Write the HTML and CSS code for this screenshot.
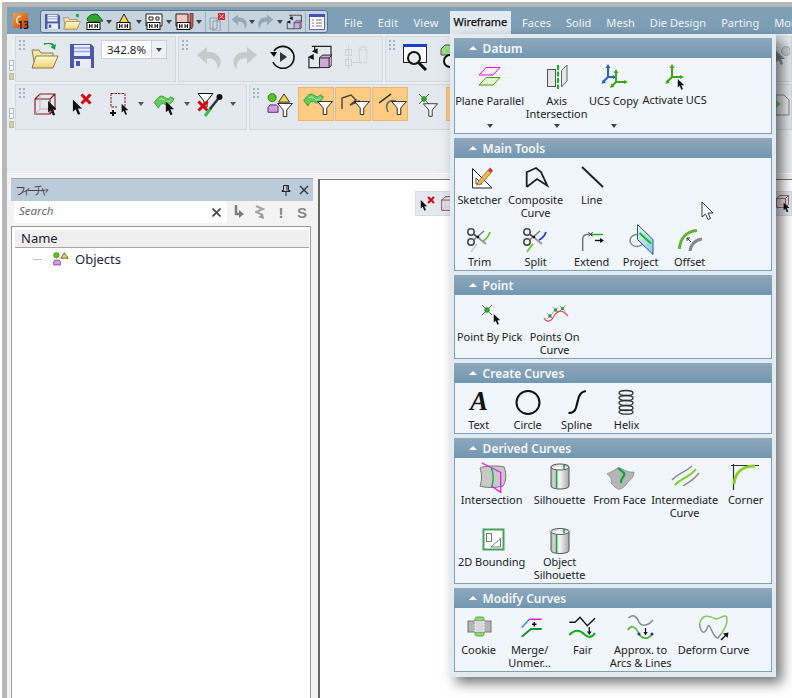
FILE: index.html
```html
<!DOCTYPE html>
<html lang="en">
<head>
<meta charset="utf-8">
<title>Wireframe</title>
<link rel="stylesheet" href="styles.css">
</head>
<body>
<svg class="defs" width="0" height="0">
  <defs>
    <linearGradient id="gFold" x1="0" y1="0" x2="0" y2="1"><stop offset="0" stop-color="#fffbd8"/><stop offset="1" stop-color="#f5cf70"/></linearGradient>
    <linearGradient id="gCyl" x1="0" y1="0" x2="1" y2="0"><stop offset="0" stop-color="#bdbdbd"/><stop offset=".5" stop-color="#f4f4f4"/><stop offset="1" stop-color="#a8a8a8"/></linearGradient>
    <linearGradient id="gPlane" x1="0" y1="0" x2="1" y2="1"><stop offset="0" stop-color="#e6f3fb"/><stop offset="1" stop-color="#8cc6e8"/></linearGradient>
    <symbol id="cur" viewBox="0 0 12 17"><path d="M1 0V13L4 10.5 6.5 16.5 9 15.5 6.500 9.500H11Z" fill="#111"/></symbol>
    <symbol id="fun" viewBox="0 0 18 16"><path d="M.5.500H17.500L11 8V15.500H7V8Z" fill="#fff" stroke="#111"/></symbol>
    <symbol id="xred" viewBox="0 0 12 12"><path d="M1.500 1.500 10.500 10.500M10.500 1.500 1.500 10.500" stroke="#d8000c" stroke-width="3" fill="none"/></symbol>
    <symbol id="ribbon" viewBox="0 0 22 16"><path d="M.5 9C4 5 6 1 10 2.500 14 4.500 15 7 18 3L21.500 5C19 11 15 13 12 11 8.500 9 7 11 5 15Z" fill="#63cb5e" stroke="#3d9c3d"/><path d="M6 6C8 5 10 5 12 7M13 8C15 9 17 8 19 6" fill="none" stroke="#b8efb0"/></symbol>
    <symbol id="flop" viewBox="0 0 24 24"><path d="M0 0H21L24 3V24H0Z" fill="#4d58a8"/><rect x="4" y="1" width="16" height="11" fill="#e8effa"/><path d="M4 4H20M4 7.500H20" stroke="#8fa9dc" stroke-width="1.500"/><rect x="4" y="15" width="17" height="9" fill="#e8ecf6"/><rect x="6" y="17" width="4" height="5" fill="#4d58a8"/></symbol>
    <symbol id="fold" viewBox="0 0 28 26"><path d="M13 1C17-1 22 0 23 4" fill="none" stroke="#1f9c3c" stroke-width="2"/><path d="M25 1 24 7 19.500 4Z" fill="#1f9c3c"/><path d="M1 7H8L10 10H22V24H4Z" fill="#f6e6a6" stroke="#8c7a4a"/><path d="M5 13H27L22 25H1Z" fill="url(#gFold)" stroke="#8c7a4a"/></symbol>
    <symbol id="hh" viewBox="0 0 14 8"><rect x=".5" y=".5" width="13" height="7" fill="#fff" stroke="#111"/><path d="M3 2V6M5.500 2V6M3 4H5.500M8.500 2V6M11 2V6M8.500 4H11" stroke="#111"/></symbol>
    <symbol id="undo" viewBox="0 0 25 22"><path d="M1 8 11 0V5C20 4 25 10 24.500 15.500 24.500 18 23.500 20 21.500 22 22 14 17 10.500 11 11.500V17Z" fill="currentColor"/></symbol>
    <symbol id="swap" viewBox="0 0 26 24"><path d="M5 1H25V13M2 12V23H13M8 1V5" fill="none" stroke="#222" stroke-width="1.200"/><path d="M11 3 5 6 11 9ZM1 12 7 15 7 9Z" fill="#111"/><path d="M13 13 16 10H26V20L23 23H13Z" fill="#cfa8d4" stroke="#222"/><path d="M13 13H23V23M23 13 26 10" fill="none" stroke="#222"/></symbol>
    <symbol id="cube" viewBox="0 0 22 22"><path d="M1 6 6 1H21V16L16 21H1ZM1 6H16V21M16 6 21 1" fill="none" stroke="#801818" stroke-width="1.100"/><path d="M6 1V16H21M6 16 1 21" fill="none" stroke="#c8a8a8" stroke-width=".9"/></symbol>
    <symbol id="mix" viewBox="0 0 26 24"><circle cx="5.500" cy="5" r="4.500" fill="#58c020" stroke="#2f6c14" stroke-width=".8"/><path d="M18.500 1 24.500 10H12.500Z" fill="#f2d24a" stroke="#222"/><path d="M1 16 3 13H10L12 15V21H1Z" fill="#d0a0dc" stroke="#5a1580"/></symbol>
    <symbol id="sci" viewBox="0 0 32 32"><circle cx="7" cy="8" r="3.200" fill="none" stroke="#444" stroke-width="1.500"/><circle cx="7" cy="18" r="3.200" fill="none" stroke="#444" stroke-width="1.500"/><path d="M9.500 10 22 20" stroke="#999" stroke-width="2"/><path d="M9.500 16 20 7" stroke="#777" stroke-width="1.500"/><path d="M9.500 10 14 13.500" stroke="#444" stroke-width="1.500"/><circle cx="14" cy="13" r="1.300" fill="#111"/></symbol>
    <symbol id="cyl" viewBox="0 0 32 32"><path d="M7 5C7 1 25 1 25 5V24C25 28 7 28 7 24Z" fill="url(#gCyl)" stroke="#555"/><path d="M7 5C7 9 25 9 25 5" fill="#fff" stroke="#555"/><path d="M12.500 8V26.500M20 2.500V7" stroke="#16a34a" stroke-width="1.600"/></symbol>
    <symbol id="pt" viewBox="0 0 12 12"><path d="M1 1 11 11M11 1 1 11" stroke="#222" stroke-width=".7"/><circle cx="6" cy="6" r="2.400" fill="#1fb51f" stroke="#0c6b0c" stroke-width=".6"/></symbol>
  </defs>
</svg>
<div class="frame">
  <header class="title">
    <div class="logo"><svg width="15" height="15" viewBox="0 0 15 15"><path d="M8 3C4 3 3 7 4 9 5 11 7 11 8 10" fill="none" stroke="#ffe6c8" stroke-width="1.500"/></svg><span class="logo-n">13</span></div>
    <div class="quick">
      <svg class="qi" width="20" height="16"><use href="#flop" x="3" width="15" height="15"/></svg>
      <svg class="qi" width="20" height="16"><use href="#fold" x="1" y="-1" width="18" height="17"/></svg>
      <svg class="qi qgap" width="20" height="18"><path d="M3 7C4 1 12 0 14 2L19 8 6 9Z" fill="#2fa52f" stroke="#125f12"/><use href="#hh" x="2" y="9" width="15" height="8"/></svg>
      <i class="drop"></i>
      <svg class="qi" width="20" height="18"><path d="M10 1 15 10H5Z" fill="#f2d24a" stroke="#222"/><path d="M14 9 19 17H11Z" fill="#f6a26a"/><use href="#hh" x="2" y="9" width="15" height="8"/></svg>
      <i class="drop"></i>
      <svg class="qi" width="20" height="18"><path d="M2 1H18V13H2Z" fill="#fff" stroke="#222"/><path d="M5 4H9V7H5ZM12 4H15V7H12Z" fill="none" stroke="#222"/><use href="#hh" x="2" y="9" width="15" height="8"/></svg>
      <i class="drop"></i>
      <svg class="qi" width="20" height="18"><path d="M2 1H14V13H2Z" fill="#f5c8c0" stroke="#222"/><path d="M16 0H19V13L17.500 16 16 13Z" fill="#d9534f" stroke="#222" stroke-width=".6"/><use href="#hh" x="2" y="9" width="15" height="8"/></svg>
      <i class="drop"></i>
      <i class="qs"></i>
      <svg class="qi" width="20" height="18"><path d="M3 5H10V16H3ZM6 8H13V18H6Z" fill="#cfd9e2" stroke="#8a98a6"/><rect x="11" y="0" width="7" height="7" fill="#e0202c"/><path d="M12.500 1.500 16.500 5.500M16.500 1.500 12.500 5.500" stroke="#fff"/></svg>
      <i class="qs"></i>
      <svg class="qu" width="18" height="16"><use href="#undo" x="1" width="16" height="15"/></svg>
      <i class="drop nar"></i>
      <svg class="qu" width="20" height="16"><g transform="matrix(-1 0 0 1 19 0)"><use href="#undo" x="1" width="16" height="15"/></g></svg>
      <i class="drop nar"></i>
      <svg class="qi" width="20" height="18"><use href="#swap" x="2" y="1" width="16" height="16"/></svg>
      <i class="qs"></i>
      <svg class="qi" width="20" height="18"><rect x="2.500" y="1.500" width="15" height="15" fill="#fff" stroke="#5e6fa8"/><rect x="2" y="1" width="16" height="3" fill="#3d52b4"/><path d="M5 7H7M9 7H15M5 10H7M9 10H15M5 13H7M9 13H15" stroke="#777"/></svg>
    </div>
    <nav class="menus">
      <span class="mi">File</span>
      <span class="mi">Edit</span>
      <span class="mi">View</span>
      <div class="tabwrap">
        <span class="tab">Wireframe</span>
        <div class="drawer">
          <section class="grp h96">
            <div class="gh"><i class="up"></i><span>Datum</span></div>
            <div class="gb c-datum">
              <div class="it"><svg class="ic" viewBox="0 0 32 32"><path d="M5 13 12 5.500H26L19 13Z" fill="#fdeefc" stroke="#f0f"/><path d="M5 23 12 15.500H26L19 23Z" fill="#e2f6d6" stroke="#4c9a00"/></svg><span class="lbl">Plane Parallel</span><i class="chev"></i></div>
              <div class="it"><svg class="ic" viewBox="0 0 32 32"><rect x="6.500" y="7.500" width="8" height="17" fill="#e6e6e6" stroke="#555"/><path d="M20.500 8.500 26 3V19L20.500 25Z" fill="#e8e8e8" stroke="#666"/><path d="M17 3V27" stroke="#17b51c" stroke-width="2" stroke-dasharray="5 1.500"/></svg><span class="lbl">Axis<br>Intersection</span><i class="chev"></i></div>
              <div class="it"><svg class="ic" viewBox="0 0 32 32"><path d="M10 4V15H17M10 15 5 20" fill="none" stroke="#2565c0" stroke-width="2"/><path d="M10 2 7.500 6H12.500ZM19 15 15 13V17ZM3.500 22 5 17.500 8 20.500Z" fill="#2565c0"/><path d="M18 9V20H28M18 20 13.500 24.500" fill="none" stroke="#3fa510" stroke-width="2"/><path d="M18 7 15.500 11H20.500ZM30 20 26 18V22ZM12 26 13.500 21.500 16.500 24.500Z" fill="#3fa510"/></svg><span class="lbl">UCS Copy</span><i class="chev"></i></div>
              <div class="it it-up"><svg class="ic" viewBox="0 0 32 32"><path d="M13 4V15H23M13 15 8 20" fill="none" stroke="#3fa510" stroke-width="2"/><path d="M13 2 10.500 6H15.500ZM25 15 21 13V17ZM6.500 22 8 17.500 11 20.500Z" fill="#3fa510"/><use href="#cur" x="18" y="17" width="8" height="11"/></svg><span class="lbl">Activate UCS</span></div>
            </div>
          </section>
          <section class="grp h133">
            <div class="gh"><i class="up"></i><span>Main Tools</span></div>
            <div class="gb c-main">
              <div class="it"><svg class="ic" viewBox="0 0 32 32"><path d="M8.500 6.500V26H28Z" fill="#fff" stroke="#222"/><path d="M12 22V16L18 22Z" fill="none" stroke="#222" stroke-width=".8"/><path d="M14 20 24 8 27 11 17 22 13 23Z" fill="#f4b84a" stroke="#8a5a10" stroke-width=".7"/><path d="M24 8 26 5.500 29 8.500 27 11Z" fill="#c8362e"/></svg><span class="lbl">Sketcher</span></div>
              <div class="it"><svg class="ic" viewBox="0 0 32 32"><path d="M6.700 25V10.300L16 6 21 10 27.300 23.500 17 17 6.700 25" fill="none" stroke="#222" stroke-width="1.800"/></svg><span class="lbl">Composite<br>Curve</span></div>
              <div class="it"><svg class="ic" viewBox="0 0 32 32"><path d="M6 5 27 25" stroke="#222" stroke-width="2"/></svg><span class="lbl">Line</span></div>
              <i class="blank"></i><i class="blank"></i>
              <div class="it"><svg class="ic" viewBox="0 0 32 32"><use href="#sci" width="32" height="32"/><path d="M19 17C23 15 25 11 26 8" fill="none" stroke="#6dbb2a" stroke-width="1.600"/><path d="M7 28C9 25 11 22 13 20" fill="none" stroke="#ccc" stroke-width="1.600"/></svg><span class="lbl">Trim</span></div>
              <div class="it"><svg class="ic" viewBox="0 0 32 32"><use href="#sci" width="32" height="32"/><path d="M19 16C23 14 25 11 26 8" fill="none" stroke="#1f3fd0" stroke-width="1.800"/><path d="M7 28C9 25 11 22 13 20" fill="none" stroke="#7cc63a" stroke-width="1.800"/></svg><span class="lbl">Split</span></div>
              <div class="it"><svg class="ic" viewBox="0 0 32 32"><path d="M6.700 27V15C6.700 12 9 10.300 13 10.300" fill="none" stroke="#777" stroke-width="1.500"/><path d="M15 10.500H27" stroke="#17b51c" stroke-width="1.500"/><path d="M12.500 8.300 16.500 12.300M16.500 8.300 12.500 12.300" stroke="#111"/><path d="M19 16.500H25" stroke="#111" stroke-width="1.400"/><path d="M28 16.500 24 14V19Z" fill="#111"/></svg><span class="lbl">Extend</span></div>
              <div class="it"><svg class="ic" viewBox="0 0 32 32"><ellipse cx="12" cy="16.500" rx="7" ry="6" fill="none" stroke="#888" stroke-width="1.500"/><path d="M12.500.5 28 15.500V30.500L12.500 15.500Z" fill="url(#gPlane)" stroke="#245d80"/><path d="M14.500 9 26 19.500" stroke="#10c010" stroke-width="2"/></svg><span class="lbl">Project</span></div>
              <div class="it"><svg class="ic" viewBox="0 0 32 32"><path d="M5.500 25C6 14 13 7 23 6.500" fill="none" stroke="#63b32e" stroke-width="3"/><path d="M16 27C16.500 21 21 16 28 15" fill="none" stroke="#888" stroke-width="3"/><path d="M13 14 17 18M13 14V17M13 14H16" fill="none" stroke="#111" stroke-width=".8"/></svg><span class="lbl">Offset</span></div>
            </div>
          </section>
          <section class="grp h84">
            <div class="gh"><i class="up"></i><span>Point</span></div>
            <div class="gb c-point">
              <div class="it"><svg class="ic" viewBox="0 0 32 32"><use href="#pt" x="7" y="5" width="12" height="12"/><use href="#cur" x="19" y="15" width="8" height="11"/></svg><span class="lbl">Point By Pick</span></div>
              <div class="it"><svg class="ic" viewBox="0 0 32 32"><path d="M5 19C8 24 12 23 15 17 19 10 24 11 29 17" fill="none" stroke="#dc4a5a" stroke-width="1.200"/><use href="#pt" x="7.500" y="13.500" width="7" height="7"/><use href="#pt" x="13" y="7.500" width="7" height="7"/><use href="#pt" x="20" y="6" width="7" height="7"/></svg><span class="lbl">Points On<br>Curve</span></div>
            </div>
          </section>
          <section class="grp h71">
            <div class="gh"><i class="up"></i><span>Create Curves</span></div>
            <div class="gb c-create">
              <div class="it"><svg class="ic" viewBox="0 0 32 32"><text x="16" y="23" text-anchor="middle" class="bigA">A</text></svg><span class="lbl">Text</span></div>
              <div class="it"><svg class="ic" viewBox="0 0 32 32"><circle cx="16" cy="15.500" r="11.500" fill="none" stroke="#111" stroke-width="2"/></svg><span class="lbl">Circle</span></div>
              <div class="it"><svg class="ic" viewBox="0 0 32 32"><path d="M7.500 26C16 26 15 19 17 13 18 8 20 4.500 25 4" fill="none" stroke="#111" stroke-width="2.200"/></svg><span class="lbl">Spline</span></div>
              <div class="it"><svg class="ic" viewBox="0 0 32 32"><g fill="none" stroke="#333" stroke-width="1.300"><ellipse cx="15" cy="6" rx="7" ry="2.500"/><ellipse cx="15" cy="11" rx="7" ry="2.500"/><ellipse cx="15" cy="16" rx="7" ry="2.500"/><ellipse cx="15" cy="21" rx="7" ry="2.500"/><ellipse cx="15" cy="25" rx="7" ry="2.200"/></g></svg><span class="lbl">Helix</span></div>
            </div>
          </section>
          <section class="grp h146">
            <div class="gh"><i class="up"></i><span>Derived Curves</span></div>
            <div class="gb c-derived">
              <div class="it"><svg class="ic" viewBox="0 0 32 32"><path d="M4 6C7 3.500 24 3.500 28 5 31 12 30 20 27 24 20 26 9 26 4 24 6 18 6 12 4 6Z" fill="#c9c9c9" stroke="#777"/><path d="M6 1 24.700 10.300V30.300L15.500 24" fill="none" stroke="#f0f" stroke-width="1.200"/><path d="M15 5C18 12 18 18 15.500 25" fill="none" stroke="#22b14c" stroke-width="1.500"/></svg><span class="lbl">Intersection</span></div>
              <div class="it"><svg class="ic" viewBox="0 0 32 32"><use href="#cyl" width="32" height="32"/></svg><span class="lbl">Silhouette</span></div>
              <div class="it"><svg class="ic" viewBox="0 0 32 32"><path d="M3 12 14 6C18 5 22 11 30 10 30 16 26 18 24 20 22 24 17 28 14 27 10 25 9 23 7 21 8 18 7 15 3 12Z" fill="#b5b5b5" stroke="#777" stroke-width=".6"/><path d="M14 6 20 11C22 15 16 15 17 21" fill="none" stroke="#0fa53c" stroke-width="2.200"/></svg><span class="lbl">From Face</span></div>
              <div class="it"><svg class="ic" viewBox="0 0 32 32"><path d="M3 18C9 11 14 12 23 4" fill="none" stroke="#888" stroke-width="1.300"/><path d="M6 23C13 15 19 17 27 7" fill="none" stroke="#7ed321" stroke-width="2"/><path d="M14 24C20 20 25 18 30 11" fill="none" stroke="#888" stroke-width="1.300"/></svg><span class="lbl">Intermediate<br>Curve</span></div>
              <div class="it"><svg class="ic" viewBox="0 0 32 32"><path d="M1 3.500H29M3.500 2V28" stroke="#333" stroke-width="1.200" fill="none"/><path d="M4 22C5 10 13 4 25 4" fill="none" stroke="#8ad321" stroke-width="3"/></svg><span class="lbl">Corner</span></div>
              <div class="it"><svg class="ic" viewBox="0 0 32 32"><rect x="7.500" y="5.500" width="20" height="20" fill="#fff" stroke="#46a05a" stroke-width="2"/><rect x="10.500" y="9.500" width="5" height="8" fill="none" stroke="#555" stroke-width=".8"/><path d="M15 23 24.500 14.500V23Z" fill="none" stroke="#555" stroke-width=".8"/></svg><span class="lbl">2D Bounding</span></div>
              <div class="it"><svg class="ic" viewBox="0 0 32 32"><use href="#cyl" y="2.500" width="32" height="32"/></svg><span class="lbl">Object<br>Silhouette</span></div>
            </div>
          </section>
          <section class="grp h84">
            <div class="gh"><i class="up"></i><span>Modify Curves</span></div>
            <div class="gb c-modify">
              <div class="it"><svg class="ic" viewBox="0 0 32 32"><rect x="12" y="5" width="9" height="19" rx="2" fill="#8fdc72" stroke="#5aa548"/><rect x="5" y="9" width="23" height="11" fill="#b5b5b5" stroke="#777"/><rect x="12" y="9" width="9" height="11" fill="#d8d8d8"/><path d="M12 9V20M21 9V20" stroke="#fff" stroke-dasharray="1.500 1.500"/></svg><span class="lbl">Cookie</span></div>
              <div class="it"><svg class="ic" viewBox="0 0 32 32"><path d="M7.700 15.700 15.300 7.300" stroke="#3c8cf0" stroke-width="1.500"/><path d="M15.300 7.300H27.700" stroke="#f010d0" stroke-width="1.500"/><path d="M7.700 24.700 17 17H27.700" fill="none" stroke="#109030" stroke-width="1.800"/><path d="M20.300 10V14.500M18 12.300H22.500" stroke="#111" stroke-width="1.400"/></svg><span class="lbl">Merge/<br>Unmer...</span></div>
              <div class="it"><svg class="ic" viewBox="0 0 32 32"><path d="M2.300 10.300H8L13 5.300 20.300 13.700 28 6.300" fill="none" stroke="#111" stroke-width="1.400"/><path d="M22.300 15V20" stroke="#111" stroke-width="1.300"/><path d="M22.300 23 20 19.500H24.600Z" fill="#111"/><path d="M2.300 23C8 17 13 18 17 22 21 26 25 26 28 21" fill="none" stroke="#16b016" stroke-width="2.200"/></svg><span class="lbl">Fair</span></div>
              <div class="it"><svg class="ic" viewBox="0 0 32 32"><path d="M3.500 6C8 1 12 5 14 10 16 14 22 15 28 8" fill="none" stroke="#888" stroke-width="1.500"/><path d="M3 18C6 12 11 15 14 22 18 28 24 27 27 22" fill="none" stroke="#50b030" stroke-width="1.600"/><circle cx="14" cy="22" r="1.500" fill="#1f2fd0"/><circle cx="27" cy="22" r="1.500" fill="#1f2fd0"/><path d="M20.500 16V21" stroke="#111" stroke-width="1.200"/><path d="M20.500 23.500 18.500 20H22.500Z" fill="#111"/></svg><span class="lbl">Approx. to<br>Arcs &amp; Lines</span></div>
              <div class="it"><svg class="ic" viewBox="0 0 32 32"><path d="M1.500 12C4 2 10 3 18 7 24 6 29 0 29 8 29 14 26 18 23 22" fill="none" stroke="#7cc852" stroke-width="1.400"/><path d="M1.500 12C3 22 7 23 10 14 12 10 15 27 20 26L23 22" fill="none" stroke="#888" stroke-width="1.400"/><path d="M23 28 29 22" stroke="#111" stroke-width="1.500"/><path d="M30.500 20.500 25 21.500 29.500 26Z" fill="#111"/></svg><span class="lbl">Deform Curve</span></div>
            </div>
          </section>
        </div>
      </div>
      <span class="mi">Faces</span>
      <span class="mi">Solid</span>
      <span class="mi">Mesh</span>
      <span class="mi">Die Design</span>
      <span class="mi">Parting</span>
      <span class="mi">Mol</span>
    </nav>
  </header>

  <div class="tools">
    <div class="tool-row">
      <div class="handles"><i class="hd"></i><i class="hd"></i><i class="hd on"></i></div>
      <div class="band b-file">
        <i class="grip"></i>
        <svg width="28" height="26"><use href="#fold" width="28" height="26"/></svg>
        <svg width="24" height="24"><use href="#flop" width="24" height="24"/></svg>
        <div class="zoombox"><span class="zoomval">342.8%</span><span class="zoombtn"><i class="drop tight"></i></span></div>
      </div>
      <div class="band b-edit">
        <i class="grip"></i>
        <svg class="soft" width="25" height="24"><use href="#undo" y="2" width="25" height="22"/></svg>
        <svg class="soft" width="25" height="24"><g transform="matrix(-1 0 0 1 25 0)"><use href="#undo" y="2" width="25" height="22"/></g></svg>
        <svg width="25" height="24" viewBox="0 0 25 24"><path d="M4 6A11 11 0 1 1 3 17" fill="none" stroke="#111" stroke-width="1.600"/><path d="M0 7H7L4 12Z" fill="#111"/><path d="M10 7 17 12 10 17Z" fill="#333"/></svg>
        <svg width="25" height="24"><use href="#swap" width="25" height="24"/></svg>
        <svg width="25" height="24" viewBox="0 0 25 24"><g fill="none" stroke="#cfd3d6"><path d="M14 5H24M16 5V2H22V5M15 5 16 18H22L23 5"/><rect x="1.500" y="4.500" width="6" height="6"/><rect x="1.500" y="14.500" width="6" height="6"/><path d="M4.500 0V24M8 17.500H18"/></g></svg>
      </div>
      <div class="band b-view">
        <i class="grip"></i>
        <svg width="25" height="27" viewBox="0 0 25 27"><rect x=".5" y=".5" width="23" height="18" fill="#fff" stroke="#222"/><rect y="0" width="24" height="3" fill="#1d3ed0"/><circle cx="11" cy="14" r="6" fill="#e6eef5" stroke="#111" stroke-width="2"/><path d="M15 18 23 26" stroke="#111" stroke-width="3"/></svg>
        <svg width="25" height="27" viewBox="0 0 25 27"><path d="M1 5 5 1H15V11H1Z" fill="#9adf8a" stroke="#555"/><circle cx="10" cy="17" r="6" fill="#fff" stroke="#111" stroke-width="2"/></svg>
        <svg class="b-end" width="15" height="20" viewBox="0 0 15 20"><path d="M0 4V17L3.500 14 6 19 8 18 6 13H10Z" fill="#8a8a8a"/><circle cx="11" cy="5" r="4.500" fill="#d0d0d0" stroke="#aaa"/></svg>
      </div>
    </div>
    <div class="tool-row">
      <div class="handles"><i class="hd"></i><i class="hd"></i><i class="hd on"></i></div>
      <div class="band b-sel">
        <i class="grip"></i>
        <svg width="22" height="23"><use href="#cube" width="22" height="22"/><use href="#cur" x="13" y="8" width="11" height="15"/></svg>
        <svg width="20" height="23"><use href="#xred" x="8" width="12" height="12"/><use href="#cur" y="6" width="11" height="17"/></svg>
        <svg width="20" height="23" viewBox="0 0 20 23"><path d="M2 .5H16V14M2 .5V14H8" fill="none" stroke="#801818" stroke-dasharray="2.500 1"/><path d="M4 17V23M1 20H7" stroke="#111" stroke-width="2"/><use href="#cur" x="12" y="10" width="8" height="13"/></svg>
        <i class="drop tb"></i>
        <svg width="22" height="23"><use href="#ribbon" y="1" width="22" height="15"/><use href="#cur" x="12" y="8" width="10" height="15"/></svg>
        <i class="drop tb"></i>
        <svg width="26" height="24" viewBox="0 0 26 24"><path d="M1 .5H16L10 8V14H7V8Z" fill="#fff" stroke="#111"/><use href="#xred" y="7" width="12" height="12"/><path d="M8 23 14 15" stroke="#35c050" stroke-width="3"/><path d="M13 16 21 6" stroke="#333" stroke-width="2.500"/><circle cx="22.500" cy="4" r="3" fill="#111"/></svg>
        <i class="drop tb"></i>
      </div>
      <div class="band b-filter">
        <i class="grip"></i>
        <svg width="26" height="24"><use href="#mix" width="24" height="22"/><use href="#fun" x="10" y="10" width="16" height="14"/></svg>
        <div class="flt"><svg width="34" height="30"><use href="#ribbon" x="3" y="3" width="21" height="15"/><use href="#fun" x="17" y="12" width="16" height="14"/></svg></div>
        <div class="flt"><svg width="34" height="30" viewBox="0 0 34 30"><path d="M5 20V9L14 6 19 11 13 16 22 12 25 18" fill="none" stroke="#444" stroke-width="1.400"/><use href="#fun" x="17" y="12" width="16" height="14"/></svg></div>
        <div class="flt"><svg width="34" height="30" viewBox="0 0 34 30"><path d="M5 14 17 5" stroke="#222" stroke-width="1.500"/><path d="M14 23C10 14 16 10 22 12" fill="none" stroke="#666" stroke-width="1.500"/><use href="#fun" x="17" y="12" width="16" height="14"/></svg></div>
        <svg width="20" height="24"><use href="#pt" width="12" height="12"/><use href="#fun" x="5" y="10" width="15" height="14"/></svg>
        <div class="flt"></div>
        <svg class="f-end" width="14" height="24" viewBox="0 0 14 24"><path d="M0 2H8L13 7V22H0Z" fill="#e8e8e8" stroke="#888"/><path d="M0 7 5 11 0 15Z" fill="#7bbf6a"/></svg>
      </div>
    </div>
  </div>

  <main class="work">
    <aside class="panel">
      <div class="ptitle">
        <span class="ptext">フィーチャ</span>
        <svg class="pin" width="10" height="11" viewBox="0 0 10 11"><path d="M2.500.5H7.500V5.500H9V6.500H1V5.500H2.500ZM5 6.500V11M6 1V5.500" fill="none" stroke="#222"/></svg>
        <svg class="close" width="10" height="10" viewBox="0 0 10 10"><path d="M1 1 9 9M9 1 1 9" stroke="#333" stroke-width="1.400"/></svg>
      </div>
      <div class="psearch">
        <div class="sbox"><span class="splace">Search</span><svg width="9" height="9" viewBox="0 0 9 9"><path d="M.5.500 8.500 8.500M8.500.500.5 8.500" stroke="#444" stroke-width="1.600"/></svg></div>
        <div class="sicons">
          <svg width="10" height="14" viewBox="0 0 10 14"><path d="M2 0V9H8" fill="none" stroke="#7d7d7d" stroke-width="2.500"/><path d="M5 5V13L10 9Z" fill="#7d7d7d"/></svg>
          <svg width="10" height="15" viewBox="0 0 10 15"><path d="M1 1 8 4 1 7 8 10" fill="none" stroke="#a5a5a5" stroke-width="2"/><path d="M9 14 3 12 8 9Z" fill="#999"/></svg>
          <span class="sch">!</span>
          <span class="sch">S</span>
        </div>
      </div>
      <div class="tree">
        <div class="thead">Name</div>
        <div class="trow">
          <i class="tdash"></i>
          <svg width="16" height="15"><use href="#mix" width="16" height="15"/></svg>
          <span>Objects</span>
        </div>
      </div>
    </aside>
    <section class="canvas">
      <div class="float">
        <svg width="15" height="15"><use href="#xred" x="7" width="8" height="8"/><use href="#cur" y="4" width="8" height="11"/></svg>
        <svg width="15" height="15"><use href="#cube" width="15" height="15"/></svg>
        <svg class="float-end" width="14" height="19"><use href="#cube" y="1" width="13" height="13"/><use href="#cur" x="7" y="8" width="7" height="11"/></svg>
      </div>
    </section>
  </main>

  <svg class="pointer" width="14" height="20" viewBox="0 0 14 20"><path d="M1 1V16L4.500 13 7 18.500 9.500 17.500 7 12H12Z" fill="#fff" stroke="#333"/></svg>
</div>
</body>
</html>
```
FILE: styles.css
```css
* { box-sizing: border-box; }
html, body { margin: 0; height: 100%; overflow: hidden; background: #fff; }
body { font-family: "Noto Sans", "Liberation Sans", sans-serif; color: #222; }
.defs { position: absolute; }
i { display: block; }
svg { display: block; flex: none; }

.frame {
  position: relative;
  height: 696px;
  margin: 2px 0 0 2px;
  border-left: 5px solid #b8b8b8;
  border-top: 5px solid #b8b8b8;
  display: flex;
  flex-direction: column;
  background: #f3f3f3;
}

/* title bar */
.title {
  flex: none;
  height: 27px;
  background: #7f9fb7;
  display: flex;
  align-items: flex-end;
  padding-left: 6px;
  position: relative;
  z-index: 5;
}
.logo {
  width: 15px;
  height: 15px;
  margin: 0 12px 6px 0;
  background: linear-gradient(135deg, #f6a13a, #c8400c);
  position: relative;
}
.logo-n { position: absolute; right: -1px; bottom: -3px; font-size: 10px; line-height: 11px; color: #111; font-weight: 600; }
.quick {
  width: 291px;
  height: 23px;
  margin-bottom: 1px;
  background: #c6d4df;
  border: 1px solid #55728a;
  border-radius: 3px;
  display: flex;
  align-items: center;
  padding-left: 1px;
}
.qgap { margin-left: 2px; }
.qu { color: #94a8b8; }
.qs { width: 3px; height: 20px; border-left: 1px solid #9eb0c0; margin-left: 1px; margin-right: -1px; }
.drop { width: 10px; height: 4px; position: relative; }
.drop::after {
  content: "";
  position: absolute;
  left: 2px;
  top: 0;
  border: 3px solid transparent;
  border-bottom: 0;
  border-top: 4px solid #444;
}
.drop.nar { width: 8px; }
.drop.nar::after { left: 1px; }
.drop.tight { width: 6px; }
.drop.tight::after { left: 0; }
.drop.tb { width: 6px; margin-top: 9px; }
.drop.tb::after { left: 0; border-top-color: #555; }

.menus {
  display: flex;
  gap: 15px;
  margin-left: 16px;
  height: 23px;
  align-items: center;
  white-space: nowrap;
}
.mi { font-size: 11px; color: #eef4f8; letter-spacing: .05px; line-height: 16px; }
.mi:nth-child(-n+3) { letter-spacing: .27px; }
.tabwrap { position: relative; margin: 0 -4px; height: 23px; }
.tab {
  display: block;
  height: 23px;
  padding: 3px 4px 0;
  background: #e3ebf2;
  font-size: 11px;
  letter-spacing: -.1px;
  line-height: 16px;
  color: #111;
  -webkit-text-stroke: .25px #111;
}

/* ribbon drawer */
.drawer {
  position: absolute;
  left: 0;
  top: 23px;
  width: 326px;
  padding: 4px 4px 5px;
  display: flex;
  flex-direction: column;
  gap: 4px;
  background: #e3ebf2;
  box-shadow: 6px 6px 12px rgba(0, 0, 0, .55);
  white-space: normal;
}
.grp { display: flex; flex-direction: column; }
.h96 { height: 96px; }
.h133 { height: 133px; }
.h84 { height: 84px; }
.h71 { height: 71px; }
.h146 { height: 146px; }
.gh {
  flex: none;
  height: 20px;
  background: linear-gradient(#8fa8bc, #7297b1);
  display: flex;
  align-items: center;
  padding-left: 15px;
  color: #f4f8fb;
  font-size: 12px;
  font-weight: 600;
}
.up {
  width: 0;
  height: 0;
  margin-right: 6px;
  border: 4px solid transparent;
  border-top: 0;
  border-bottom: 4px solid #fff;
}
.gb {
  flex: 1;
  display: grid;
  align-content: start;
  border: 1px solid #80a0b8;
  border-top: 0;
  background: #f0f6fc;
  padding-top: 1px;
}
.c-datum { grid-template-columns: 70px 64px 50px 72px; grid-template-rows: 1fr; align-content: stretch; }
.c-main { grid-template-columns: 50px 62px 50px 48px 50px; }
.c-point { grid-template-columns: 70px 60px; }
.c-create { grid-template-columns: 48px 50px 48px 52px; }
.c-derived { grid-template-columns: 74px 62px 58px 72px 50px; }
.c-modify { grid-template-columns: 48px 54px 52px 64px 82px; }
.it { display: flex; flex-direction: column; align-items: center; padding-top: 3px; min-width: 0; }
.ic { width: 32px; height: 32px; overflow: visible; }
.lbl {
  font-size: 11px;
  line-height: 13px;
  margin: -1px 0 2px;
  text-align: center;
  white-space: nowrap;
  color: #222;
  letter-spacing: -.06px;
}
.c-datum .lbl { margin-top: 0; }
.c-datum .it-up .lbl { margin-top: -1px; }
.chev {
  margin-top: auto;
  margin-bottom: 5px;
  border: 3px solid transparent;
  border-bottom: 0;
  border-top: 4px solid #444;
}
.bigA { font-family: "Liberation Serif", serif; font-style: italic; font-weight: 700; font-size: 27px; fill: #111; }

/* toolbars */
.tools {
  flex: none;
  height: 140px;
  background: #ebeff2;
  border-bottom: 1px solid #fff;
  padding-top: 2px;
  display: flex;
  flex-direction: column;
  gap: 2px;
  overflow: hidden;
}
.tool-row { height: 46px; display: flex; gap: 1px; padding-left: 2px; }
.handles { width: 5px; display: flex; flex-direction: column; justify-content: flex-end; padding-bottom: 2px; flex: none; }
.hd { height: 6px; margin-top: -1px; border: 1px solid #a9bdcc; background: #fff; }
.hd.on { margin-top: 2px; height: 7px; background: #f6c77e; }
.band {
  flex: none;
  height: 46px;
  background: #e3e9ef;
  border: 1px solid #d2d8de;
  margin-right: 1px;
}
.grip {
  width: 6px;
  height: 11px;
  background-image: radial-gradient(circle at 1.200px 1.200px, #98b4ca 1.200px, transparent 1.300px);
  background-size: 4px 4px;
}
.b-file, .b-edit, .b-view, .b-filter {
  display: flex;
  align-items: flex-start;
  padding: 6px 0 0 3px;
}
.b-file { width: 161px; }
.b-file .grip, .b-edit .grip, .b-view .grip, .b-sel .grip, .b-filter .grip { margin-top: -3px; }
.b-file svg:nth-of-type(1) { margin-left: 6px; }
.b-file svg:nth-of-type(2) { margin-left: 11px; margin-top: 1px; }
.zoombox {
  width: 66px;
  height: 19px;
  margin: -3px 0 0 7px;
  background: #fff;
  border: 1px solid #c9cfd5;
  display: flex;
  align-items: center;
}
.zoomval { flex: 1; font-size: 11.500px; padding-left: 5px; color: #223; }
.zoombtn { width: 15px; height: 17px; background: #eef1f4; border-left: 1px solid #c9cfd5; display: flex; align-items: center; justify-content: center; }
.b-edit { width: 205px; gap: 12px; padding-top: 8px; }
.soft { color: #c6cacd; }
.b-edit .grip, .b-view .grip { margin-top: -5px; margin-right: -4px; }
.b-view { flex: 1; min-width: 0; margin-right: 0; gap: 12px; padding-top: 7px; overflow: hidden; }
.b-view .grip { margin-top: -4px; }
.b-end { margin-left: auto; margin-right: 1px; margin-top: 2px; }
.b-sel {
  width: 232px;
  display: grid;
  grid-template-columns: 7px 38px 36px 38px 6px 40px 6px 40px 6px;
  justify-items: center;
  align-items: start;
  padding: 8px 0 0 3px;
}
.b-sel .grip { justify-self: start; margin-top: -5px; }
.b-filter {
  flex: 1;
  min-width: 0;
  margin-right: 0;
  display: grid;
  grid-template-columns: 9px 36px 37px 37px 37px 37px 37px 1fr;
  justify-items: center;
  align-items: start;
  padding: 8px 0 0 3px;
  overflow: hidden;
}
.b-filter .grip { justify-self: start; margin-top: -5px; }
.f-end { justify-self: end; margin-right: 1px; }
.flt {
  justify-self: start;
  width: 36px;
  height: 34px;
  margin-top: -6px;
  background: #fdcb82;
  border: 1px solid #eeb476;
  padding: 1px;
}

/* work area */
.work { flex: 1; min-height: 0; display: flex; gap: 5px; padding: 4px 0 0 4px; }
.panel { width: 302px; flex: none; display: flex; flex-direction: column; }
.ptitle {
  flex: none;
  height: 23px;
  background: #bccbd9;
  border-top: 1px solid #98a4b0;
  display: flex;
  align-items: center;
  padding: 0 4px;
}
.ptext {
  flex: 1;
  font-family: "Noto Sans CJK JP", sans-serif;
  font-size: 11px;
  color: #445;
  letter-spacing: -5px;
}
.pin { margin-right: 8px; }
.psearch { flex: none; height: 22px; display: flex; }
.sbox {
  width: 213px;
  margin-left: 3px;
  height: 22px;
  background: #fff;
  border-radius: 2px;
  display: flex;
  align-items: center;
  justify-content: space-between;
  padding: 0 6px 0 5px;
}
.splace { font-size: 11.500px; line-height: 14px; margin-top: -2px; font-style: italic; color: #666; }
.sicons { display: flex; align-items: center; width: 86px; padding-left: 7px; gap: 11px; }
.sch { font-size: 15px; font-weight: 700; color: #888; width: 10px; text-align: center; font-family: "Liberation Sans", sans-serif; }
.tree {
  flex: 1;
  width: 300px;
  margin-top: 3px;
  background: #fff;
  border: 1px solid #9a9a9a;
  border-bottom: 0;
  padding: 3px 1px 0 3px;
}
.thead {
  height: 18px;
  background: #efefef;
  border-bottom: 1px solid #a5a5a5;
  padding-left: 6px;
  font-size: 13px;
  line-height: 17px;
  color: #223;
}
.trow { display: flex; align-items: center; height: 22px; font-size: 13px; color: #1c2440; padding-left: 18px; }
.tdash { width: 9px; height: 1px; background: #bbb; margin-right: 11px; }
.trow span { margin-left: 6px; }
.canvas {
  flex: 1;
  min-width: 0;
  margin-top: 1px;
  background: #fff;
  border-left: 2px solid #666;
  border-top: 1px solid #777;
  position: relative;
  overflow: hidden;
}
.float {
  position: absolute;
  left: 95px;
  right: 0;
  top: 11px;
  height: 25px;
  background: #e3e9ef;
  border: 1px solid #d5dbe1;
  display: flex;
  align-items: center;
  gap: 6px;
  padding-left: 4px;
}
.float-end { margin-left: auto; margin-right: 1px; }
.pointer { position: absolute; left: 694px; top: 194px; z-index: 9; }
```
